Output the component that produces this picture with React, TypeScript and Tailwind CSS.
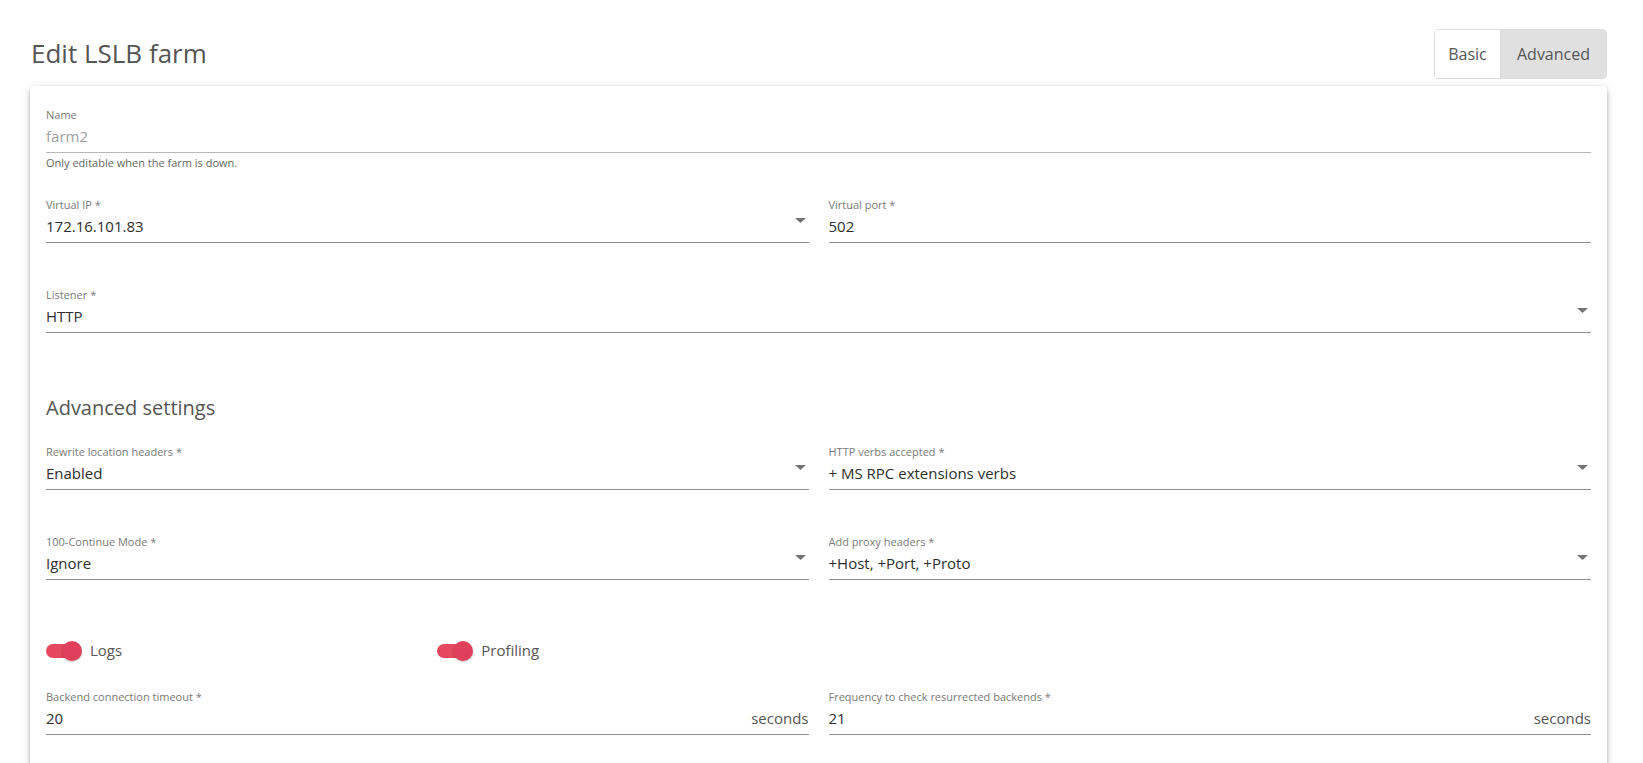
import React from "react";

const FONT = { fontFamily: '"Open Sans", "Noto Sans", Arial, sans-serif' };

function Arrow() {
  return (
    <svg width="11" height="5" viewBox="0 0 11 5" className="mt-[1px] mr-[3px] shrink-0">
      <path d="M0 0 L11 0 L5.5 5 Z" fill="#757575" />
    </svg>
  );
}

type FieldProps = {
  label: string;
  value: string;
  select?: boolean;
  disabled?: boolean;
  suffix?: string;
};

function Field({ label, value, select, disabled, suffix }: FieldProps) {
  return (
    <div className="flex flex-col">
      <div className="h-[16px] text-[11px] leading-[14px] text-[#7a7a7a]">{label}</div>
      <div
        className={
          "box-border h-[29px] pt-[3px] flex justify-between items-start border-b " +
          (disabled ? "border-[#b8b8b8]" : "border-[#8f8f8f]")
        }
      >
        <span className={"text-[15px] leading-[18px] " + (disabled ? "text-[#a0a0a0]" : "text-[#2e2e2e]")}>
          {value}
        </span>
        {select ? <Arrow /> : null}
        {suffix ? <span className="text-[15px] leading-[18px] text-[#555]">{suffix}</span> : null}
      </div>
    </div>
  );
}

function Toggle({ label }: { label: string }) {
  return (
    <div className="flex items-center h-[20px]">
      <div className="relative w-[36px] h-[20px] shrink-0">
        <div className="absolute left-0 top-[3px] w-[34px] h-[14px] rounded-full bg-[#e5495f]" />
        <div className="absolute right-0 top-0 w-[20px] h-[20px] rounded-full bg-[#e0405a] shadow-[0_1px_2px_rgba(0,0,0,0.25)]" />
      </div>
      <span className="ml-[8px] text-[15px] leading-[18px] mb-[2px] text-[#555]">{label}</span>
    </div>
  );
}

export default function App() {
  return (
    <div className="min-h-screen bg-white pl-[30px] pr-[36px] pt-[29px]" style={FONT}>
      <div className="flex items-center justify-between h-[50px]">
        <h1 className="text-[26px] leading-[32px] text-[#555] font-normal mb-[2px] ml-[1px]">Edit LSLB farm</h1>
        <div className="flex h-[50px] rounded-[4px] border border-[#dcdcdc] overflow-hidden box-border">
          <div className="w-[66px] flex items-center justify-center text-[16px] text-[#555] bg-white border-r border-[#dcdcdc]">
            Basic
          </div>
          <div className="w-[105px] flex items-center justify-center text-[16px] text-[#555] bg-[#e0e0e0]">
            Advanced
          </div>
        </div>
      </div>

      <div className="mt-[7px] bg-white rounded-[4px] px-4 pt-[22px] pb-[40px] shadow-[0_2px_4px_-1px_rgba(0,0,0,0.2),0_4px_5px_0_rgba(0,0,0,0.14),0_1px_10px_0_rgba(0,0,0,0.12)]">
        <Field label="Name" value="farm2" disabled />
        <div className="mt-[3px] text-[11px] leading-[14px] text-[#666]">Only editable when the farm is down.</div>

        <div className="mt-[28px] grid grid-cols-2 gap-x-5">
          <Field label="Virtual IP *" value="172.16.101.83" select />
          <Field label="Virtual port *" value="502" />
        </div>

        <div className="mt-[45px]">
          <Field label="Listener *" value="HTTP" select />
        </div>

        <h2 className="mt-[63px] text-[20px] leading-[24px] text-[#555] font-normal">Advanced settings</h2>

        <div className="mt-[25px] grid grid-cols-2 gap-x-5 gap-y-[45px]">
          <Field label="Rewrite location headers *" value="Enabled" select />
          <Field label="HTTP verbs accepted *" value="+ MS RPC extensions verbs" select />
          <Field label="100-Continue Mode *" value="Ignore" select />
          <Field label="Add proxy headers *" value="+Host, +Port, +Proto" select />
        </div>

        <div className="mt-[61px] grid grid-cols-4 gap-x-5">
          <Toggle label="Logs" />
          <Toggle label="Profiling" />
        </div>

        <div className="mt-[29px] grid grid-cols-2 gap-x-5">
          <Field label="Backend connection timeout *" value="20" suffix="seconds" />
          <Field label="Frequency to check resurrected backends *" value="21" suffix="seconds" />
        </div>
      </div>
    </div>
  );
}
